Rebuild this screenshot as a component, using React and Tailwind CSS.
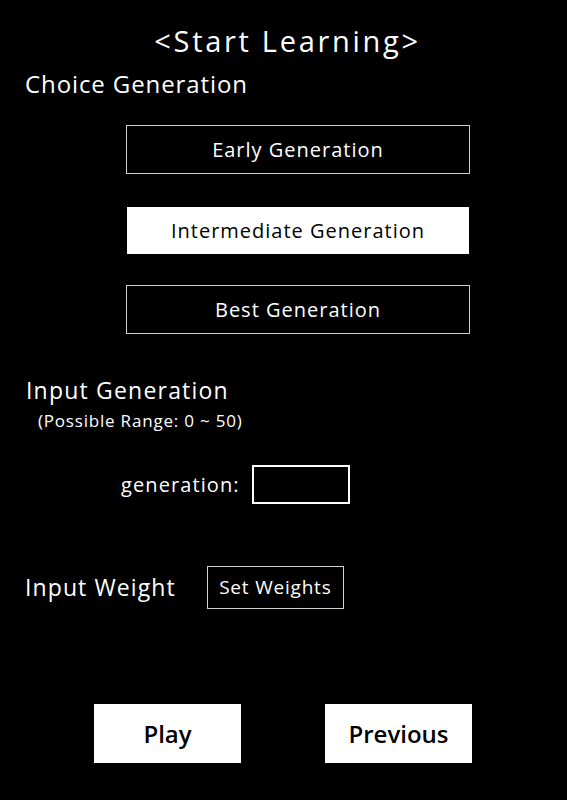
import React, { useState } from "react";

const generations = [
  { id: "early", label: "Early Generation", box: "h-[49px] w-[344px]" },
  { id: "intermediate", label: "Intermediate Generation", box: "h-[47px] w-[342px] ml-[1px] mt-[33px]" },
  { id: "best", label: "Best Generation", box: "h-[49px] w-[344px] mt-[31px]" },
];

export default function App() {
  const [selected, setSelected] = useState("intermediate");
  const [generation, setGeneration] = useState("");

  return (
    <div className="w-[567px] h-[800px] bg-black text-white font-['Open_Sans',sans-serif] flex flex-col">
      <h1 className="mt-[21px] pl-[8px] text-center text-[29px] leading-[40px] tracking-[2.7px]">
        &lt;Start Learning&gt;
      </h1>

      <h2 className="mt-[8px] ml-[25px] text-[24px] leading-[30px] tracking-[0.9px]">
        Choice Generation
      </h2>

      {/* Generation choices */}
      <div className="mt-[26px] ml-[126px] flex flex-col">
        {generations.map((g) => (
          <button
            key={g.id}
            onClick={() => setSelected(g.id)}
            className={`${g.box} text-[20px] tracking-[1px] border ${
              selected === g.id
                ? "bg-white text-black border-white"
                : "bg-black text-white border-[#cfcfcf]"
            }`}
          >
            {g.label}
          </button>
        ))}
      </div>

      <h2 className="mt-[41px] ml-[26px] text-[23px] leading-[30px] tracking-[1.2px]">
        Input Generation
      </h2>
      <p className="mt-[5px] ml-[38px] text-[17px] leading-[22px] tracking-[0.8px]">
        (Possible Range: 0 ~ 50)
      </p>

      <div className="mt-[33px] ml-[121px] flex items-center gap-[12px]">
        <span className="text-[20px] tracking-[1.1px]">generation:</span>
        <input
          value={generation}
          onChange={(e) => setGeneration(e.target.value)}
          className="w-[98px] h-[39px] bg-black border-2 border-white text-white px-2 outline-none"
        />
      </div>

      <div className="mt-[62px] ml-[25px] flex items-center gap-[31px]">
        <span className="text-[23px] tracking-[1.1px]">Input Weight</span>
        <button className="h-[43px] w-[137px] border border-[#cfcfcf] text-[19px] tracking-[0.8px]">
          Set Weights
        </button>
      </div>

      <div className="mt-[95px] ml-[94px] flex gap-[84px]">
        <button className="w-[147px] h-[59px] bg-white text-black text-[24px] font-semibold">
          Play
        </button>
        <button className="w-[147px] h-[59px] bg-white text-black text-[24px] font-semibold">
          Previous
        </button>
      </div>
    </div>
  );
}
